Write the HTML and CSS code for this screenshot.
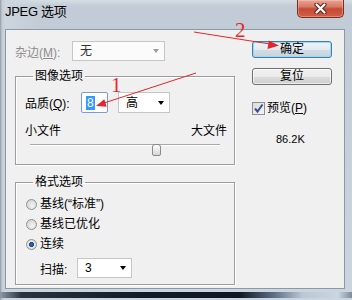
FILE: index.html
```html
<!DOCTYPE html>
<html>
<head>
<meta charset="utf-8">
<title>JPEG 选项</title>
<link rel="stylesheet" href="styles.css">
</head>
<body>
<div class="window">
  <div class="titlebar">
    <span class="title">JPEG 选项</span>
    <div class="close">
      <svg width="13" height="11" viewBox="0 0 13 11">
        <path d="M2.5 1.5 L10.5 9.5 M10.5 1.5 L2.5 9.5" stroke="#5a2219" stroke-width="4.2" stroke-linecap="round"/>
        <path d="M2.5 1.5 L10.5 9.5 M10.5 1.5 L2.5 9.5" stroke="#ffffff" stroke-width="2.2" stroke-linecap="round"/>
      </svg>
    </div>
  </div>
  <div class="client">
    <div class="left">
      <div class="matte-row">
        <span class="matte-label">杂边(<u>M</u>):</span>
        <div class="select matte"><span class="sel-text">无</span><i class="arrow gray"></i></div>
      </div>
      <fieldset class="group g1">
        <legend>图像选项</legend>
        <div class="quality-row">
          <span class="q-label">品质(<u>Q</u>):</span>
          <div class="input"><span class="hl">8</span></div>
          <div class="select quality"><span class="sel-text">高</span><i class="arrow"></i></div>
        </div>
        <div class="size-row"><span>小文件</span><span>大文件</span></div>
        <div class="slider"><div class="track"></div><div class="thumb"></div></div>
      </fieldset>
      <fieldset class="group g2">
        <legend>格式选项</legend>
        <div class="radio-row first"><span class="radio"></span><span>基线(“标准”)</span></div>
        <div class="radio-row"><span class="radio"></span><span>基线已优化</span></div>
        <div class="radio-row"><span class="radio checked"></span><span>连续</span></div>
        <div class="scan-row">
          <span class="scan-label">扫描:</span>
          <div class="select scan"><span class="sel-text">3</span><i class="arrow"></i></div>
        </div>
      </fieldset>
    </div>
    <div class="right">
      <div class="btn default">确定</div>
      <div class="btn">复位</div>
      <div class="check-row">
        <span class="checkbox">
          <svg width="11" height="11" viewBox="0 0 11 11"><path d="M2 5.5 L4.5 8.5 L9.5 1.5" fill="none" stroke="#3b4f8c" stroke-width="2"/></svg>
        </span>
        <span>预览(<u>P</u>)</span>
      </div>
      <div class="filesize">86.2K</div>
    </div>
  </div>
  <div class="frame-bottom"><div class="strip"></div></div>

  <svg class="annot" width="352" height="300" viewBox="0 0 352 300">
    <line x1="196" y1="73" x2="104" y2="103" stroke="#e3262a" stroke-width="1"/>
    <polygon points="96,106 106.7,106.8 104.3,99.2" fill="#e3262a"/>
    <text x="111" y="92" class="num">1</text>
    <line x1="194" y1="32" x2="270" y2="44" stroke="#e3262a" stroke-width="1"/>
    <polygon points="279,45.5 267.5,49 268.8,40.5" fill="#e3262a"/>
    <text x="235" y="37" class="num">2</text>
  </svg>
</div>
</body>
</html>
```

FILE: styles.css
```css
html, body {
  margin: 0;
  padding: 0;
}

body {
  font-family: "Liberation Sans", "Noto Sans CJK SC", sans-serif;
  font-size: 12px;
  color: #000;
}

.window {
  position: relative;
  width: 352px;
  height: 300px;
  overflow: hidden;
  background:
    linear-gradient(to right, #8f9aa6 0, #c3ccd5 2px, #ccd5de 5px, rgba(204,213,222,0) 40px),
    linear-gradient(180deg, #d6dde4 0, #c3ccd6 6px, #c2ccd6 24px, #cad5e0 100%);
}

.titlebar {
  height: 29px;
  display: flex;
  align-items: flex-start;
}

.title {
  margin: 4px 0 0 5px;
  font-size: 13px;
  line-height: 16px;
  letter-spacing: -0.3px;
}

.close {
  margin-left: auto;
  margin-right: 8px;
  width: 47px;
  height: 18px;
  box-sizing: border-box;
  border: 1px solid #7b2d24;
  border-top: none;
  border-radius: 0 0 5px 5px;
  background: linear-gradient(180deg, #e8a597 0, #d77866 40%, #c44a34 52%, #d35d44 100%);
  box-shadow: inset 0 0 0 1px rgba(255,220,210,0.35);
  display: flex;
  align-items: center;
  justify-content: center;
}

.client {
  margin-left: 5px;
  width: 340px;
  height: 260px;
  box-sizing: border-box;
  border: 1px solid #8c98a5;
  background: #f0f0f0;
  display: flex;
  padding: 11px 0 0 9px;
}

.left {
  width: 220px;
}

.right {
  width: 80px;
  margin-left: 17px;
  display: flex;
  flex-direction: column;
}

/* selects */
.select {
  box-sizing: border-box;
  height: 21px;
  border: 1px solid #c6c6c6;
  background: #fff;
  display: flex;
  align-items: center;
  padding-left: 7px;
}

.sel-text {
  line-height: 14px;
}

.arrow {
  margin-left: auto;
  margin-right: 5px;
  width: 0;
  height: 0;
  border-left: 3.5px solid transparent;
  border-right: 3.5px solid transparent;
  border-top: 4px solid #000;
}

.arrow.gray {
  border-top-color: #9a9a9a;
}

.matte-row {
  display: flex;
  align-items: center;
  height: 20px;
}

.matte-label {
  width: 57px;
  color: #8d8d8d;
}

.matte {
  width: 93px;
  height: 20px;
  background: #fbfbfb;
  color: #333;
}

/* groups */
.group {
  margin: 8px 0 0;
  padding: 0;
  width: 220px;
  min-width: 0;
  box-sizing: border-box;
  border: 1px solid #9c9c9c;
  box-shadow: inset 1px 1px 0 #fff, 1px 1px 0 #fff;
}

.group legend {
  margin-left: 17px;
  padding: 0 2px;
  font-size: 12px;
  line-height: 14px;
}

.g2 {
  margin-top: 10px;
  padding-bottom: 6px;
}

.quality-row {
  display: flex;
  align-items: center;
  height: 21px;
  margin-top: 9px;
  padding-left: 9px;
}

.q-label {
  width: 56px;
}

.input {
  width: 27px;
  height: 21px;
  box-sizing: border-box;
  border: 1px solid #7a9dcb;
  border-radius: 2px;
  background: #fff;
  padding-left: 4px;
  display: flex;
  align-items: center;
}

.hl {
  background: #3399ff;
  color: #fff;
  line-height: 14px;
  padding: 0 1px;
}

.quality {
  width: 52px;
  margin-left: 10px;
}

.size-row {
  display: flex;
  justify-content: space-between;
  margin-top: 11px;
  padding: 0 7px 0 9px;
  line-height: 14px;
}

.slider {
  position: relative;
  height: 14px;
  margin: 0 14px 6px 14px;
}

.track {
  height: 1px;
  margin-top: 6px;
  background: #a8a8a8;
  border-bottom: 1px solid #ffffff;
}

.thumb {
  position: absolute;
  left: 122px;
  top: 0;
  width: 9px;
  height: 12px;
  box-sizing: border-box;
  border: 1px solid #8a8a8a;
  border-radius: 3px 3px 2px 2px;
  background: linear-gradient(180deg, #fdfdfd 0, #e6e6e6 60%, #d6d6d6 100%);
}

.radio-row {
  display: flex;
  align-items: center;
  height: 16px;
  padding-left: 10px;
  margin-top: 4px;
  line-height: 14px;
}

.radio-row.first {
  margin-top: 7px;
}

.radio {
  width: 11px;
  height: 11px;
  box-sizing: border-box;
  border: 1px solid #8f9092;
  border-radius: 50%;
  background: radial-gradient(circle at 60% 65%, #f4f4f4 0, #dcdcdc 60%, #c9c9c9 100%);
  margin-right: 3px;
  position: relative;
}

.radio.checked {
  background: radial-gradient(circle at 50% 50%, #2d6ea8 0, #1b4f86 35%, #e8e8e8 45%, #d6d6d6 100%);
}

.scan-row {
  display: flex;
  align-items: center;
  height: 20px;
  margin-top: 6px;
  padding-left: 24px;
}

.scan-label {
  width: 37px;
}

.scan {
  width: 55px;
  height: 20px;
}

/* buttons */
.btn {
  width: 80px;
  height: 17px;
  box-sizing: border-box;
  border: 1px solid #707070;
  border-radius: 3px;
  background: linear-gradient(180deg, #f2f2f2 0, #ebebeb 50%, #dddddd 50%, #cfcfcf 100%);
  box-shadow: inset 0 0 0 1px rgba(255,255,255,0.6);
  text-align: center;
  line-height: 15px;
}

.btn.default {
  border-color: #3c7fb1;
  box-shadow: inset 0 0 0 1px #9ed6f3;
  background: linear-gradient(180deg, #eef3f6 0, #e3eaf0 50%, #d2dde6 50%, #c6d3de 100%);
}

.btn + .btn {
  margin-top: 10px;
}

.check-row {
  display: flex;
  align-items: center;
  height: 14px;
  margin-top: 16px;
  line-height: 14px;
}

.checkbox {
  width: 13px;
  height: 13px;
  box-sizing: border-box;
  border: 1px solid #8e8f8f;
  background: linear-gradient(135deg, #dcdcdc 0, #f4f4f4 100%);
  margin-right: 2px;
  display: flex;
  align-items: center;
  justify-content: center;
}

.filesize {
  margin-top: 17px;
  padding-left: 24px;
  line-height: 14px;
  font-size: 11px;
}

.frame-bottom {
  height: 11px;
  padding-top: 3px;
  box-sizing: border-box;
}

.strip {
  height: 6px;
  background: linear-gradient(to right, #8c99a8 0, #2a3342 6%, #111a27 40%, #0e1723 68%, #5f7186 78%, #b9c8d6 86%, #cad6e1 96%, #7d8a98 100%);
}

.annot {
  position: absolute;
  left: 0;
  top: 0;
  pointer-events: none;
}

.annot .num {
  font-family: "Liberation Serif", serif;
  font-size: 21px;
  fill: #e3262a;
}
```
